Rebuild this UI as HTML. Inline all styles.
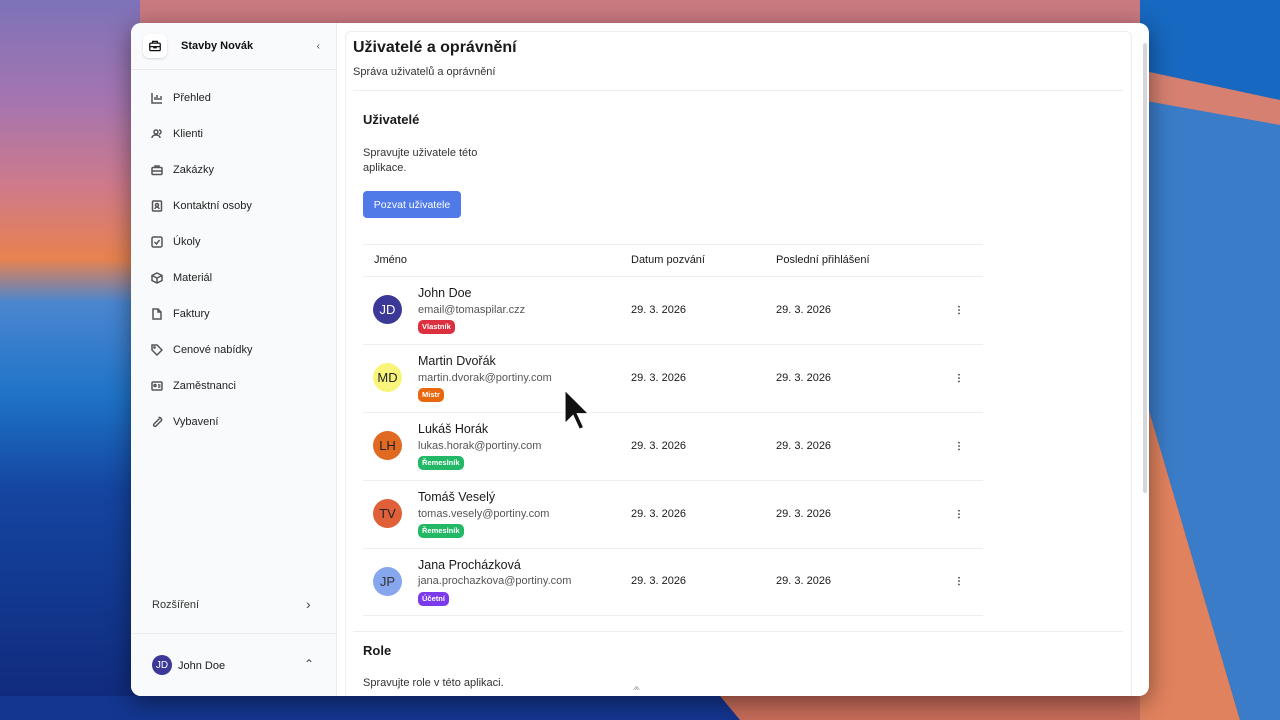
<!DOCTYPE html>
<html><head><meta charset="utf-8"><style>
*{box-sizing:border-box;margin:0;padding:0}
body{width:1280px;height:720px;overflow:hidden;font-family:"Liberation Sans",sans-serif;position:relative;background:#1c3a9a}
.bg{position:absolute;inset:0}
.win{position:absolute;left:131px;top:23px;width:1018px;height:673px;border-radius:10px;background:#fff;overflow:hidden;box-shadow:0 6px 24px rgba(0,0,0,.45)}
.side{position:absolute;left:0;top:0;width:206px;height:100%;background:#f9fafb;border-right:1px solid #ebedf0}
.brand{height:47px;border-bottom:1px solid #e8eaed;display:flex;align-items:center;padding-left:12px}
.logo{width:24px;height:24px;border-radius:6px;background:#fff;box-shadow:0 1px 2px rgba(0,0,0,.15);display:flex;align-items:center;justify-content:center}
.brand b{font-size:11px;margin-left:14px;color:#111;font-weight:bold}
.nav{position:absolute;left:20px;top:57px}
.nav div{height:36px;display:flex;align-items:center;font-size:11px;color:#222}
.nav svg{width:12px;height:12px;margin-right:10px;stroke:#555;fill:none;stroke-width:1.5}
.main{position:absolute;left:214px;top:8px;width:787px;height:680px;border:1px solid #eceef1;border-radius:6px}
.t{position:absolute;white-space:nowrap;color:#1a1a1a}
.row{position:absolute;left:232px;width:620px;border-top:1px solid #eceef1}
.av{position:absolute;width:29px;height:29px;border-radius:50%;font-size:13px;display:flex;align-items:center;justify-content:center;color:#fff}
.badge{position:absolute;height:14px;border-radius:5px;font-size:7.5px;font-weight:bold;color:#fff;padding:0 4px;line-height:14px}
.dots{position:absolute;width:2px;height:10px;background:radial-gradient(circle,#666 0.9px,transparent 1px) 0 0/2px 3.4px}
.d{font-size:11px}
.n{font-size:12.5px}
.e{font-size:11px;color:#555}
</style></head><body>
<svg class="bg" width="1280" height="720" viewBox="0 0 1280 720">
<defs><linearGradient id="l" x1="0" y1="0" x2="0" y2="1"><stop offset="0" stop-color="#7d72b8"/><stop offset=".14" stop-color="#a575b0"/><stop offset=".26" stop-color="#cf7a8a"/><stop offset=".36" stop-color="#e8824f"/><stop offset=".42" stop-color="#4b86d0"/><stop offset=".55" stop-color="#1e73c8"/><stop offset=".68" stop-color="#1445a0"/><stop offset="1" stop-color="#10287a"/></linearGradient></defs>
<rect width="1280" height="720" fill="url(#l)"/>
<rect x="140" width="1000" height="696" fill="#c97a80"/>
<polygon points="1140,0 1280,0 1280,110 1140,70" fill="#1768c0"/>
<polygon points="1140,70 1280,100 1280,125 1140,100" fill="#d58070"/>
<polygon points="1140,100 1280,125 1280,720 1240,720 1140,380" fill="#3a7cc8"/>
<polygon points="1140,380 1240,720 1140,720" fill="#e0825e"/>
<polygon points="0,696 720,696 740,720 0,720" fill="#143690"/>
<polygon points="720,696 1140,696 1140,720 740,720" fill="#c86c5a"/>
</svg>
<div class="win">
<div class="side">
 <div class="brand"><div class="logo"><svg width="14" height="14" viewBox="0 0 24 24" fill="none" stroke="#111" stroke-width="2.2"><rect x="3" y="7" width="18" height="13" rx="2"/><path d="M8 7V4h8v3M3 13h18M10 13v2h4v-2"/></svg></div><b>Stavby Novák</b><span style="margin-left:auto;margin-right:16px;font-size:10px;color:#444">‹</span></div>
 <div class="nav">
  <div><svg viewBox="0 0 12 12"><path d="M1 1v10h10M4 8V5M6 8V3M8 8V6M10 8V4"/></svg>Přehled</div>
  <div><svg viewBox="0 0 12 12"><circle cx="5" cy="4" r="2"/><path d="M1 10c0-2 2-3 4-3s4 1 4 3M8 2a2 2 0 010 4"/></svg>Klienti</div>
  <div><svg viewBox="0 0 12 12"><rect x="1" y="3.5" width="10" height="7" rx="1"/><path d="M4 3.5V2h4v1.5M1 7h10"/></svg>Zakázky</div>
  <div><svg viewBox="0 0 12 12"><rect x="1.5" y="1" width="9" height="10" rx="1"/><circle cx="6" cy="5" r="1.5"/><path d="M4 9c0-1 1-2 2-2s2 1 2 2"/></svg>Kontaktní osoby</div>
  <div><svg viewBox="0 0 12 12"><rect x="1" y="1" width="10" height="10" rx="1.5"/><path d="M3.5 6l2 2 3-4"/></svg>Úkoly</div>
  <div><svg viewBox="0 0 12 12"><path d="M6 1l5 2.5v5L6 11 1 8.5v-5zM1 3.5L6 6l5-2.5M6 6v5"/></svg>Materiál</div>
  <div><svg viewBox="0 0 12 12"><path d="M2 1h5l3 3v7H2zM7 1v3h3"/></svg>Faktury</div>
  <div><svg viewBox="0 0 12 12"><path d="M1 1h5l5 5-5 5-5-5z"/><circle cx="3.5" cy="3.5" r=".6"/></svg>Cenové nabídky</div>
  <div><svg viewBox="0 0 12 12"><rect x="1" y="2" width="10" height="8" rx="1"/><circle cx="4" cy="5.5" r="1"/><path d="M7 5h2.5M7 7h2.5"/></svg>Zaměstnanci</div>
  <div><svg viewBox="0 0 12 12"><path d="M7.5 1.5a2.5 2.5 0 013 3L5 10a1.3 1.3 0 01-2-2l5.5-5.5"/></svg>Vybavení</div>
 </div>
 <div class="t" style="left:21px;top:576px;font-size:11px;color:#333">Rozšíření</div>
 <div class="t" style="left:175px;top:573px;font-size:14px;color:#444">›</div>
 <div style="position:absolute;left:0;top:610px;width:206px;border-top:1px solid #ebedf0"></div>
 <div class="av" style="left:21px;top:632px;width:20px;height:20px;font-size:10px;background:#3b3897">JD</div>
 <div class="t" style="left:47px;top:637px;font-size:11px">John Doe</div>
 <div class="t" style="left:173px;top:634px;font-size:12px;color:#444">⌃</div>
</div>
<div class="main"></div>
<div style="position:absolute;left:1012px;top:20px;width:4px;height:450px;background:#d4d6da;border-radius:2px"></div>
<div class="t" style="left:222px;top:16px;font-size:16px;font-weight:bold">Uživatelé a oprávnění</div>
<div class="t" style="left:222px;top:43px;font-size:11px;color:#333">Správa uživatelů a oprávnění</div>
<div style="position:absolute;left:222px;top:67px;width:770px;border-top:1px solid #eceef1"></div>
<div class="t" style="left:232px;top:89px;font-size:13px;font-weight:bold">Uživatelé</div>
<div class="t" style="left:232px;top:123px;font-size:11px;line-height:15px;color:#333">Spravujte uživatele této<br>aplikace.</div>
<div style="position:absolute;left:232px;top:168px;width:98px;height:27px;background:#4f7ae8;border-radius:4px;color:#fff;font-size:10.5px;display:flex;align-items:center;justify-content:center">Pozvat uživatele</div>
<div class="row" style="top:221px;height:32px"></div>
<div class="t d" style="left:243px;top:231px">Jméno</div>
<div class="t d" style="left:500px;top:231px">Datum pozvání</div>
<div class="t d" style="left:645px;top:231px">Poslední přihlášení</div>
<div class="row" style="top:253px"></div><div class="row" style="top:321px"></div><div class="row" style="top:389px"></div><div class="row" style="top:457px"></div><div class="row" style="top:525px"></div><div class="row" style="top:592px"></div>
<div style="position:absolute;left:222px;top:608px;width:770px;border-top:1px solid #eceef1"></div>

<div class="av" style="left:242px;top:272px;background:#3b3897">JD</div>
<div class="t n" style="left:287px;top:263px">John Doe</div>
<div class="t e" style="left:287px;top:281px">email@tomaspilar.czz</div>
<div class="badge" style="left:287px;top:297px;background:#dc2f3f">Vlastník</div>

<div class="av" style="left:242px;top:340px;background:#f8f57a;color:#222">MD</div>
<div class="t n" style="left:287px;top:331px">Martin Dvořák</div>
<div class="t e" style="left:287px;top:349px">martin.dvorak@portiny.com</div>
<div class="badge" style="left:287px;top:365px;background:#e8680f">Mistr</div>

<div class="av" style="left:242px;top:408px;background:#e06a22;color:#222">LH</div>
<div class="t n" style="left:287px;top:399px">Lukáš Horák</div>
<div class="t e" style="left:287px;top:417px">lukas.horak@portiny.com</div>
<div class="badge" style="left:287px;top:433px;background:#22b865">Řemeslník</div>

<div class="av" style="left:242px;top:476px;background:#e0603a;color:#222">TV</div>
<div class="t n" style="left:287px;top:467px">Tomáš Veselý</div>
<div class="t e" style="left:287px;top:485px">tomas.vesely@portiny.com</div>
<div class="badge" style="left:287px;top:501px;background:#22b865">Řemeslník</div>

<div class="av" style="left:242px;top:544px;background:#86a6ee;color:#333">JP</div>
<div class="t n" style="left:287px;top:535px">Jana Procházková</div>
<div class="t e" style="left:287px;top:552px">jana.prochazkova@portiny.com</div>
<div class="badge" style="left:287px;top:569px;background:#7c3aed">Účetní</div>

<div class="t d" style="left:500px;top:281px">29. 3. 2026</div><div class="t d" style="left:645px;top:281px">29. 3. 2026</div>
<div class="t d" style="left:500px;top:349px">29. 3. 2026</div><div class="t d" style="left:645px;top:349px">29. 3. 2026</div>
<div class="t d" style="left:500px;top:417px">29. 3. 2026</div><div class="t d" style="left:645px;top:417px">29. 3. 2026</div>
<div class="t d" style="left:500px;top:485px">29. 3. 2026</div><div class="t d" style="left:645px;top:485px">29. 3. 2026</div>
<div class="t d" style="left:500px;top:552px">29. 3. 2026</div><div class="t d" style="left:645px;top:552px">29. 3. 2026</div>
<div class="dots" style="left:827px;top:282px"></div><div class="dots" style="left:827px;top:350px"></div><div class="dots" style="left:827px;top:418px"></div><div class="dots" style="left:827px;top:486px"></div><div class="dots" style="left:827px;top:553px"></div>

<div class="t" style="left:232px;top:620px;font-size:13px;font-weight:bold">Role</div>
<div class="t" style="left:232px;top:654px;font-size:11px;color:#333">Spravujte role v této aplikaci.</div>
<div class="t" style="left:502px;top:659px;font-size:9px;color:#aaa">⩕</div>
<svg style="position:absolute;left:430px;top:364px" width="30" height="46" viewBox="0 0 28 44"><path d="M3 2v34l8-8 6 13 5-2-6-13h11z" fill="#111" stroke="#fff" stroke-width="2"/></svg>
</div>
</body></html>
